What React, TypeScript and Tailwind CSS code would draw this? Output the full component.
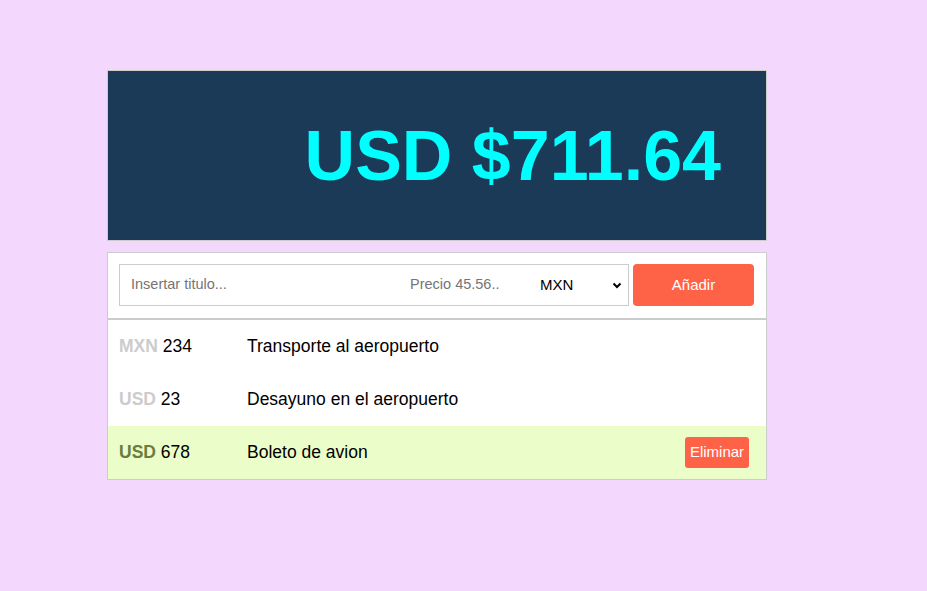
import React from "react";

const items = [
  { cur: "MXN", amount: 234, title: "Transporte al aeropuerto", active: false },
  { cur: "USD", amount: 23, title: "Desayuno en el aeropuerto", active: false },
  { cur: "USD", amount: 678, title: "Boleto de avion", active: true },
];

export default function App() {
  return (
    <div
      className="min-h-[591px] w-full bg-[#f3d7fc] pt-[70px]"
      style={{ fontFamily: '"Liberation Sans", Arial, sans-serif' }}
    >
      <div className="ml-[107px] w-[660px]">
        <div className="flex h-[171px] items-center justify-end border border-[#cccccc] bg-[#1b3a57] pr-[45px]">
          <span className="text-[70px] font-bold leading-none text-[#00ffff]">USD $711.64</span>
        </div>
        <div className="mt-[11px] border border-[#cccccc] bg-white">
          <div className="flex h-[67px] items-start gap-[4px] border-b-[2px] border-[#cccccc] pl-[11px] pr-[12px] pt-[11px]">
            <div className="flex h-[42px] flex-1 items-center border border-[#cccccc]">
              <div className="flex-1 pl-[11px] text-[14.5px] text-[#757575]">Insertar titulo...</div>
              <div className="w-[130px] pl-[10px] text-[14.5px] text-[#757575]">Precio 45.56..</div>
              <div className="flex w-[98px] items-center justify-between pl-[10px] pr-[4px] text-[15px] text-black">
                <span>MXN</span>
                <svg width="10" height="7" viewBox="0 0 10 7" className="mr-[2px]">
                  <path d="M1.5 1.5 L5 5 L8.5 1.5" stroke="#000" strokeWidth="2" fill="none" />
                </svg>
              </div>
            </div>
            <button className="h-[42px] w-[121px] rounded-[4px] bg-[#ff6347] text-[15px] text-white">Añadir</button>
          </div>
          {items.map((it, i) => (
            <div
              key={i}
              className={`flex h-[53px] items-center pl-[11px] pr-[17px] text-[17.5px] ${it.active ? "bg-[#ebfdc8]" : "bg-white"}`}
            >
              <div className="w-[128px] text-black">
                <span className={`font-bold ${it.active ? "text-[#6b7c3e]" : "text-[#cccccc]"}`}>{it.cur}</span> {it.amount}
              </div>
              <div className="flex-1 text-black">{it.title}</div>
              {it.active && (
                <button className="h-[31px] w-[64px] rounded-[3px] bg-[#ff6347] text-[15px] text-white">Eliminar</button>
              )}
            </div>
          ))}
        </div>
      </div>
    </div>
  );
}
